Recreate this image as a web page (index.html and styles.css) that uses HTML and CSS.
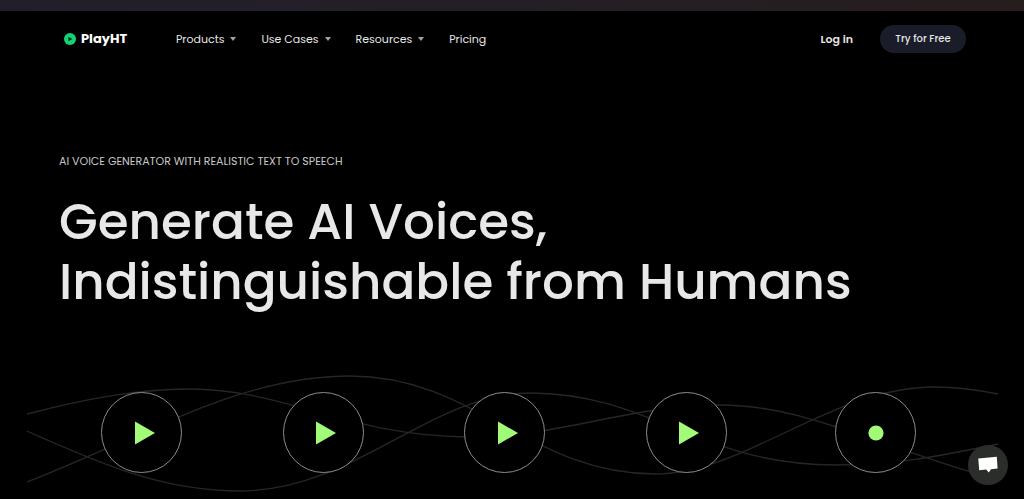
FILE: index.html
```html
<!DOCTYPE html>
<html lang="en">
<head>
    <meta charset="UTF-8">
    <meta name="viewport" content="width=device-width, initial-scale=1.0">
    <title>PlayHT</title>
    <link rel="stylesheet" href="styles.css">
</head>
<body>
    <div class="topbar"></div>

    <header class="header">
        <a href="#" class="logo">
            <svg width="12" height="12" viewBox="0 0 12 12">
                <circle cx="6" cy="6" r="6" fill="#14d377"/>
                <path d="M4.4 3.7L8.4 6L4.4 8.3Z" fill="#04331d"/>
            </svg>
            <span>PlayHT</span>
        </a>

        <nav class="menu">
            <a href="#" class="dropdown">Products</a>
            <a href="#" class="dropdown">Use Cases</a>
            <a href="#" class="dropdown">Resources</a>
            <a href="#">Pricing</a>
        </nav>

        <div class="account">
            <a href="#" class="login">Log in</a>
            <button class="try">Try for Free</button>
        </div>
    </header>

    <main>
        <section class="hero">
            <p class="eyebrow">AI VOICE GENERATOR WITH REALISTIC TEXT TO SPEECH</p>
            <h1>Generate AI Voices,<br>Indistinguishable from Humans</h1>
        </section>

        <section class="voices">
            <svg class="waves" viewBox="27 372 971 124" preserveAspectRatio="none">
                <path d="M27 414C85 399 137 389 190 389C285 389 350 437 470 437C560 437 630 405 720 405C805 405 870 444 998 480"/>
                <path d="M27 431C105 466 165 491 240 491C355 491 430 393 530 393C650 393 700 465 835 465C895 465 935 457 998 444"/>
                <path d="M27 482C150 434 240 376 350 376C475 376 530 474 655 474C745 474 830 387 935 387C957 387 978 390 998 394"/>
            </svg>
            <button class="voice" aria-label="Play voice 1">
                <svg width="20" height="24" viewBox="0 0 20 24"><path d="M0 0.5L20 12L0 23.5Z"/></svg>
            </button>
            <button class="voice" aria-label="Play voice 2">
                <svg width="20" height="24" viewBox="0 0 20 24"><path d="M0 0.5L20 12L0 23.5Z"/></svg>
            </button>
            <button class="voice" aria-label="Play voice 3">
                <svg width="20" height="24" viewBox="0 0 20 24"><path d="M0 0.5L20 12L0 23.5Z"/></svg>
            </button>
            <button class="voice" aria-label="Play voice 4">
                <svg width="20" height="24" viewBox="0 0 20 24"><path d="M0 0.5L20 12L0 23.5Z"/></svg>
            </button>
            <button class="voice record" aria-label="Record your voice">
                <svg width="16" height="16" viewBox="0 0 16 16"><circle cx="8" cy="8" r="7.6"/></svg>
            </button>
        </section>
    </main>

    <button class="chat" aria-label="Open chat">
        <svg width="20" height="18" viewBox="0 0 20 18">
            <path d="M0.3 2.6L18.8 0.8L19.6 12.5L13 13.2L10.8 16.4L8.2 13.6L1.2 14.2Z" fill="#fff"/>
        </svg>
    </button>
</body>
</html>
```
FILE: styles.css
```css
* {
    box-sizing: border-box;
}

body {
    margin: 0;
    background-color: #000;
    color: #e6e6e6;
    font-family: Poppins, Inter, sans-serif;
}

a {
    color: inherit;
    text-decoration: none;
}

button {
    border: none;
    padding: 0;
    font-family: inherit;
    color: inherit;
    cursor: pointer;
}

.topbar {
    height: 11px;
    background: linear-gradient(90deg, #231f2a, #241f26 50%, #261d1d);
}

.header {
    display: flex;
    align-items: center;
    height: 56px;
    padding: 0 58px 0 64px;
    font-size: 11px;
}

.logo {
    display: flex;
    align-items: center;
    gap: 5px;
    width: 112px;
    font-size: 13px;
    font-weight: 700;
    color: #fff;
}

.menu {
    display: flex;
    gap: 25px;
}

.dropdown::after {
    content: "";
    display: inline-block;
    margin-left: 6px;
    border: 3px solid transparent;
    border-top: 4px solid #a3a396;
    border-bottom: 0;
    vertical-align: middle;
}

.account {
    display: flex;
    align-items: center;
    gap: 27px;
    margin-left: auto;
}

.login {
    font-weight: 600;
}

.try {
    width: 86px;
    height: 28px;
    border-radius: 14px;
    background-color: #1b1c2a;
    font-size: 10px;
    font-weight: 500;
}

.hero {
    padding: 86px 59px 0;
}

.eyebrow {
    margin: 0;
    font-size: 11px;
    line-height: 16px;
    color: #c8c8c8;
}

h1 {
    margin: 23px 0 0;
    font-size: 50px;
    line-height: 60px;
    font-weight: 500;
    color: #e8e8e8;
}

.voices {
    position: relative;
    display: flex;
    justify-content: space-between;
    margin-top: 60px;
    padding: 20px 108px 23px 101px;
}

.waves {
    position: absolute;
    top: 0;
    left: 27px;
    width: calc(100% - 53px);
    height: 100%;
}

.waves path {
    fill: none;
    stroke: #262626;
    stroke-width: 1.3;
}

.voice {
    position: relative;
    display: flex;
    align-items: center;
    justify-content: center;
    width: 81px;
    height: 81px;
    padding-left: 6px;
    border: 1px solid #8c8c8c;
    border-radius: 50%;
    background-color: #000;
}

.voice svg {
    fill: #a1fb78;
}

.record {
    margin-left: 8px;
    padding-left: 0;
}

.chat {
    position: fixed;
    right: 16px;
    bottom: 14px;
    display: flex;
    align-items: center;
    justify-content: center;
    width: 40px;
    height: 40px;
    border-radius: 50%;
    background-color: #2b2d2b;
}
```
